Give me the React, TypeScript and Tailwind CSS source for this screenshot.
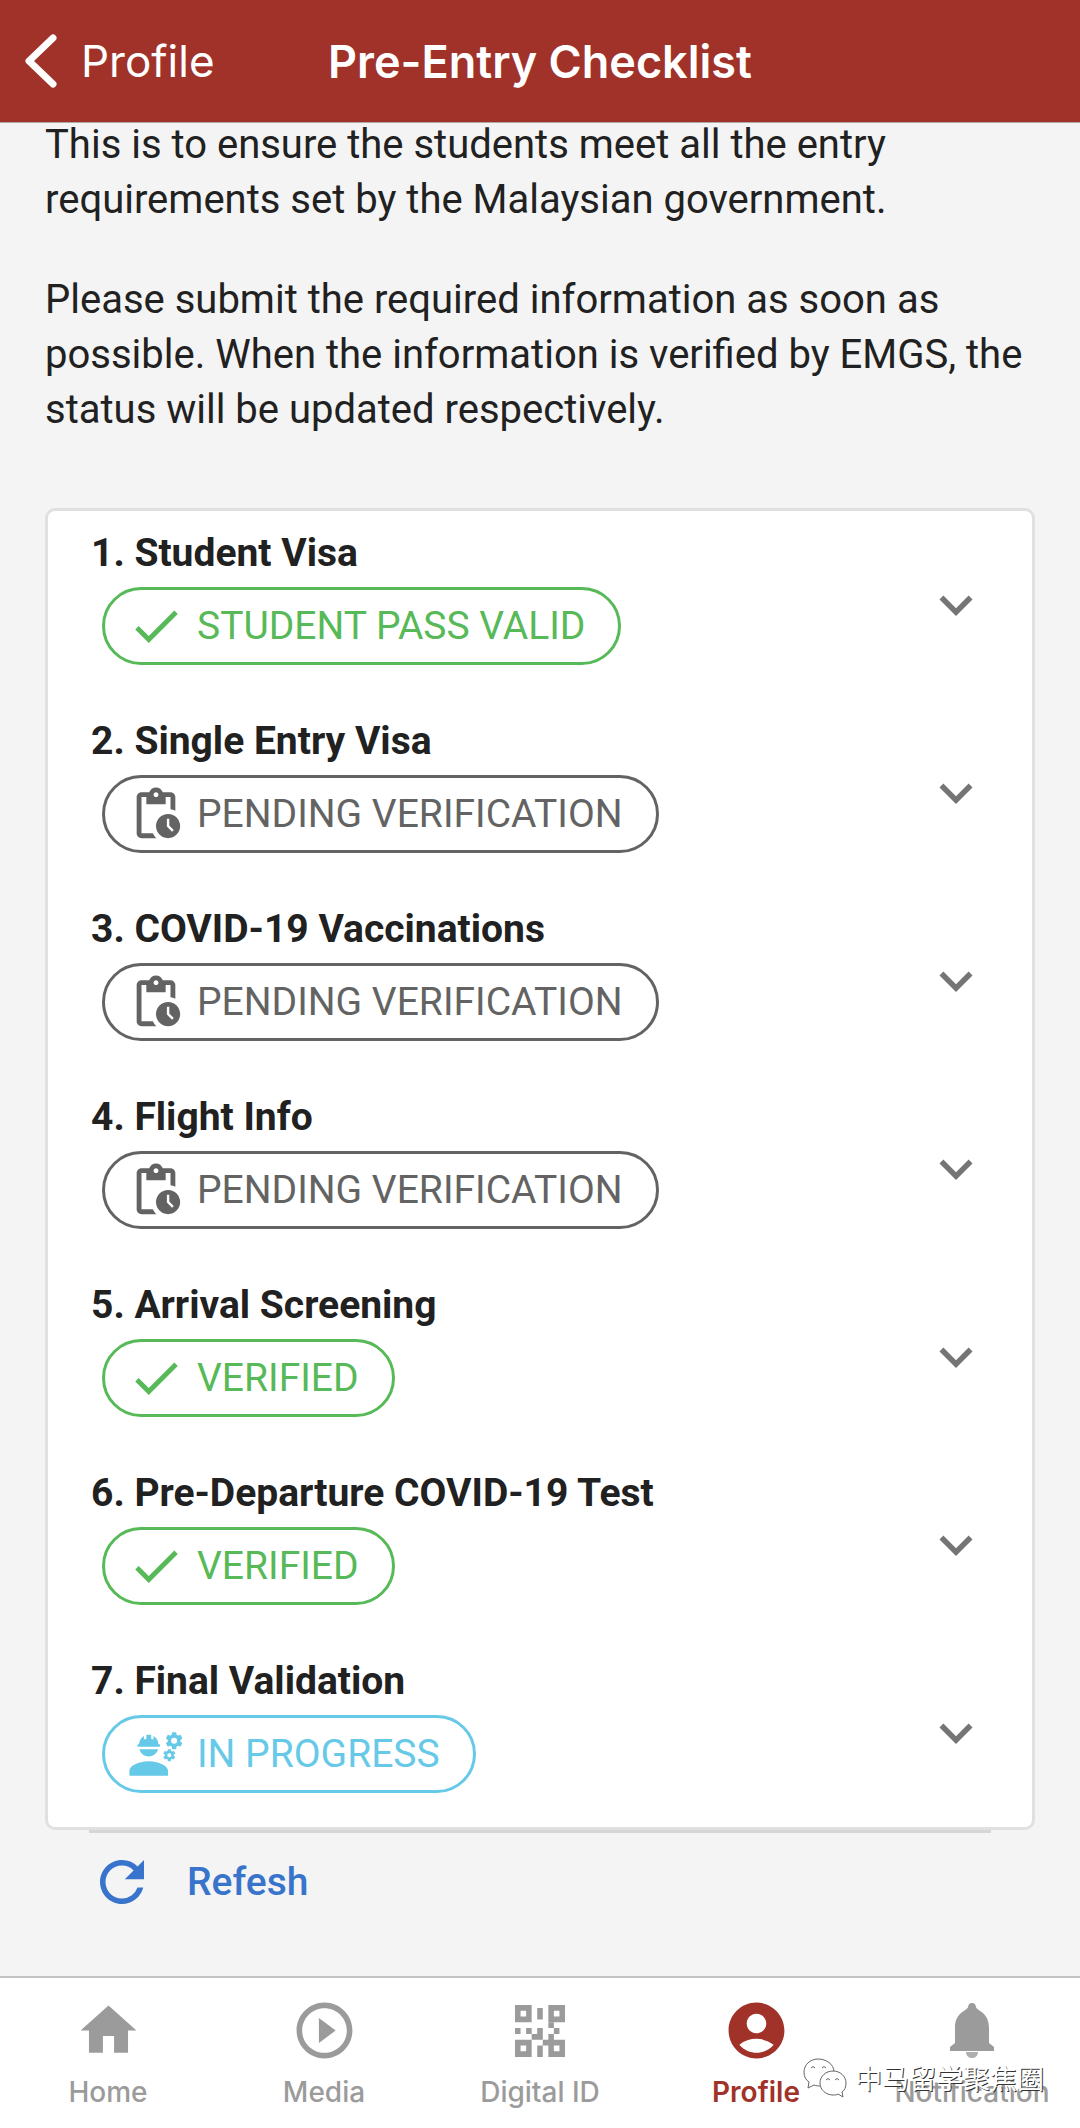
import React from "react";
import {
  MdAccountCircle,
  MdCheck,
  MdEngineering,
  MdExpandMore,
  MdHome,
  MdPendingActions,
  MdPlayCircleOutline,
  MdRefresh,
} from "react-icons/md";

type Status = "done" | "pending" | "progress";

const items: { title: string; label: string; status: Status }[] = [
  { title: "1. Student Visa", label: "STUDENT PASS VALID", status: "done" },
  { title: "2. Single Entry Visa", label: "PENDING VERIFICATION", status: "pending" },
  { title: "3. COVID-19 Vaccinations", label: "PENDING VERIFICATION", status: "pending" },
  { title: "4. Flight Info", label: "PENDING VERIFICATION", status: "pending" },
  { title: "5. Arrival Screening", label: "VERIFIED", status: "done" },
  { title: "6. Pre-Departure COVID-19 Test", label: "VERIFIED", status: "done" },
  { title: "7. Final Validation", label: "IN PROGRESS", status: "progress" },
];

const tones: Record<Status, string> = {
  done: "border-[#57b957] text-[#57b957]",
  pending: "border-[#636363] text-[#636363]",
  progress: "border-[#67c9e8] text-[#67c9e8]",
};

const icons: Record<Status, React.ComponentType<{ size?: number }>> = {
  done: MdCheck,
  pending: MdPendingActions,
  progress: MdEngineering,
};

function StatusChip({ label, status }: { label: string; status: Status }) {
  const Icon = icons[status];
  return (
    <span
      className={`ml-[11px] flex h-[78px] w-fit items-center gap-3 rounded-full border-[3px] pl-[22px] pr-[33px] text-[39px] leading-none ${tones[status]}`}
    >
      <Icon size={58} />
      {label}
    </span>
  );
}

function QrIcon() {
  return (
    <svg viewBox="0 0 9 9" preserveAspectRatio="none" className="h-[52px] w-[50px]" fill="currentColor" aria-hidden="true">
      <path
        fillRule="evenodd"
        d="M0 0h3v3H0zM1 1v1h1V1zM6 0h3v3H6zM7 1v1h1V1zM0 6h3v3H0zM1 7v1h1V7zM6 6h3v3H6zM7 7v1h1V7z"
      />
      <path d="M4 .5h1v2H4zM6 3h1v1H6zM0 4h1v1H0zM2 4h1v1H2zM4 4h1v2H3V5h1zM7 4h1v1H7zM6 5h1v2H5V6h1zM4 7h1v2H4z" />
    </svg>
  );
}

function BellIcon() {
  return (
    <svg viewBox="0 0 44 56" className="h-[56px] w-[44px]" fill="currentColor" aria-hidden="true">
      <path d="M22 0c2.500 0 3.500 1.500 4 4 1 4 13 5 13 21v15l5 4v4H0v-4l5-4V25C5 9 17 8 18 4c.5-2.500 1.500-4 4-4z" />
      <path d="M16 49h12c0 4-3 6-6 6s-6-2-6-6z" opacity=".8" />
    </svg>
  );
}

function WeChatIcon() {
  return (
    <svg viewBox="0 0 44 40" className="h-10 w-11" fill="white" stroke="#666" strokeWidth="1" aria-hidden="true">
      <path d="M15 1C7 1 1 7 1 14c0 5 2 8 5 10l-1 6 6-3c2 1 5 1 7 1 8 0 13-6 13-14S23 1 15 1z" />
      <path d="M30 13c-7 0-13 5-13 12s6 12 13 12c2 0 4 0 5-1l5 3-1-5c3-2 4-5 4-9 0-7-6-12-13-12z" />
      <path d="M8 10q2-3 4 0M19 10q2-3 4 0M23 22q2-3 4 0M32 22q2-3 4 0" fill="none" />
    </svg>
  );
}

const tabs = [
  { label: "Home", icon: <MdHome size={67} />, active: false },
  { label: "Media", icon: <MdPlayCircleOutline size={67} />, active: false },
  { label: "Digital ID", icon: <QrIcon />, active: false },
  { label: "Profile", icon: <MdAccountCircle size={67} />, active: true },
  { label: "Notification", icon: <BellIcon />, active: false },
];

export default function App() {
  return (
    <div className="flex min-h-screen flex-col bg-[#f4f4f4] font-[Roboto,sans-serif] text-[#212121]">
      <header className="z-10 grid h-[123px] grid-cols-[1fr_auto_1fr] items-center border-b border-[#b0a8a6] bg-[#a13229] px-6 font-[Inter,sans-serif] leading-none text-white">
        <button type="button" className="flex items-center gap-[23px] justify-self-start text-[44px]">
          <svg viewBox="0 0 34 54" className="h-[54px] w-[34px]" fill="none" stroke="currentColor" strokeWidth="7" strokeLinecap="round" strokeLinejoin="round" aria-hidden="true">
            <path d="M29 4 5 27l24 23" />
          </svg>
          Profile
        </button>
        <h1 className="text-[45px] font-semibold">Pre-Entry Checklist</h1>
      </header>

      <main className="-mt-1.5 flex-1 px-[45px]">
        <div className="space-y-[45px] text-[40px] leading-[55px]">
          <p>This is to ensure the students meet all the entry requirements set by the Malaysian government.</p>
          <p>
            Please submit the required information as soon as possible. When the information is verified by EMGS, the
            status will be updated respectively.
          </p>
        </div>

        <ul className="mt-[71px] rounded-[10px] border-[3px] border-[#e0e0e0] bg-white px-[43px]">
          {items.map((item) => (
            <li key={item.title}>
              <button type="button" className="flex h-[188px] w-full items-center justify-between text-left">
                <span className="flex flex-col gap-1.5 pb-5">
                  <span className="text-[39px] font-bold leading-[56px]">{item.title}</span>
                  <StatusChip label={item.label} status={item.status} />
                </span>
                <MdExpandMore size={66} className="text-[#757575]" />
              </button>
            </li>
          ))}
        </ul>
        <hr className="mx-11 border-t-[3px] border-[#d6d6d6]" />

        <button type="button" className="mt-4 flex items-center gap-8 pl-11 text-[39px] font-medium leading-none text-[#3874cb]">
          <MdRefresh size={66} />
          Refesh
        </button>
      </main>

      <nav className="relative grid h-[152px] grid-cols-5 border-t-2 border-[#c4c4c4] bg-white font-[Inter,sans-serif] text-[28px]">
        {tabs.map((tab) => (
          <a
            key={tab.label}
            href="#"
            aria-current={tab.active ? "page" : undefined}
            className={`flex flex-col items-center gap-2 pt-[19px] ${tab.active ? "font-semibold text-[#a13229]" : "font-medium text-[#9b9b9b]"}`}
          >
            <span className="flex h-[67px] items-center">{tab.icon}</span>
            <span className="leading-10">{tab.label}</span>
          </a>
        ))}
        <div className="pointer-events-none absolute right-9 top-[80px] flex items-center gap-2 font-['Noto_Sans_CJK_SC',sans-serif] text-[27px] leading-10 text-white [text-shadow:1px_1px_0_#333]">
          <WeChatIcon />
          中马留学聚焦圈
        </div>
      </nav>
    </div>
  );
}
